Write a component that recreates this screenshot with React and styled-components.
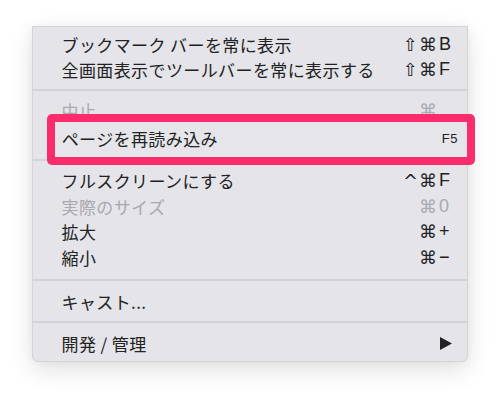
import styled, { createGlobalStyle } from "styled-components";

const GlobalStyle = createGlobalStyle`
  html, body {
    margin: 0;
    padding: 0;
    background: #ffffff;
  }
  body {
    font-family: "Noto Sans CJK JP", "Noto Sans", sans-serif;
  }
`;

const Page = styled.div`
  width: 500px;
  height: 399px;
  box-sizing: border-box;
  padding: 26px 0 0 32px;
  overflow: hidden;
`;

const Menu = styled.div`
  width: 436px;
  box-sizing: border-box;
  background: #e4e4e9;
  border: 1px solid #d3d3d8;
  border-radius: 0 0 6px 6px;
  box-shadow: 0 8px 24px rgba(0, 0, 0, 0.12), 0 0 8px rgba(0, 0, 0, 0.05);
  padding: 4.5px 0 5.25px;
`;

const Row = styled.div`
  display: flex;
  align-items: center;
  justify-content: space-between;
  height: 25.5px;
  padding: 0 13px 0 28.5px;
  font-size: 17px;
  letter-spacing: 0.4px;
  color: ${(p) => (p.$disabled ? "#a9a9ae" : "#222222")};
  white-space: nowrap;
`;

const Separator = styled.div`
  height: 2px;
  background: #d2d2d7;
  margin: ${(p) => p.$space || "6.5px 0"};
`;

const Highlight = styled.div`
  position: relative;
  z-index: 1;
  display: flex;
  align-items: center;
  justify-content: space-between;
  height: 51px;
  box-sizing: border-box;
  margin: -9px -8px 0 13.7px;
  padding: 0 9px 2px 7px;
  border: 8px solid #fb2c6c;
  border-radius: 5px;
  background: #e5e5ea;
  font-size: 17px;
  letter-spacing: 0.4px;
  color: #222222;
  white-space: nowrap;
`;

const SmallKey = styled.span`
  font-family: "Liberation Sans", "DejaVu Sans", sans-serif;
  font-size: 13px;
  letter-spacing: 0.5px;
`;

const Shortcut = styled.span`
  display: flex;
  align-items: center;
  letter-spacing: 0;
`;

const Mods = styled.span`
  font-family: "DejaVu Sans", sans-serif;
  font-size: 18px;
  letter-spacing: 1px;
`;

const Key = styled.span`
  width: 15px;
  padding-left: 1px;
  font-family: "Liberation Sans", "DejaVu Sans", sans-serif;
  font-size: 18px;
`;

const Arrow = styled.svg`
  width: 12px;
  height: 13px;
  margin-right: 2px;
  fill: #222222;
`;

function Keys({ mods, k }) {
  return (
    <Shortcut>
      <Mods>{mods}</Mods>
      <Key>{k}</Key>
    </Shortcut>
  );
}

export default function App() {
  return (
    <>
      <GlobalStyle />
      <Page>
        <Menu>
          <Row>
            ブックマーク バーを常に表示
            <Keys mods="⇧⌘" k="B" />
          </Row>
          <Row>
            全画面表示でツールバーを常に表示する
            <Keys mods="⇧⌘" k="F" />
          </Row>
          <Separator />
          <Row $disabled>
            中止
            <Keys mods="⌘" k="." />
          </Row>
          <Highlight>
            ページを再読み込み
            <SmallKey>F5</SmallKey>
          </Highlight>
          <Separator $space="-6px 0 7px" />
          <Row>
            フルスクリーンにする
            <Keys mods="^⌘" k="F" />
          </Row>
          <Row $disabled>
            実際のサイズ
            <Keys mods="⌘" k="0" />
          </Row>
          <Row>
            拡大
            <Keys mods="⌘" k="+" />
          </Row>
          <Row>
            縮小
            <Keys mods="⌘" k="−" />
          </Row>
          <Separator $space="9px 0 7.25px" />
          <Row>キャスト...</Row>
          <Separator $space="7.25px 0" />
          <Row>
            開発 / 管理
            <Arrow viewBox="0 0 12 13">
              <polygon points="0,0 12,6.5 0,13" />
            </Arrow>
          </Row>
        </Menu>
      </Page>
    </>
  );
}
